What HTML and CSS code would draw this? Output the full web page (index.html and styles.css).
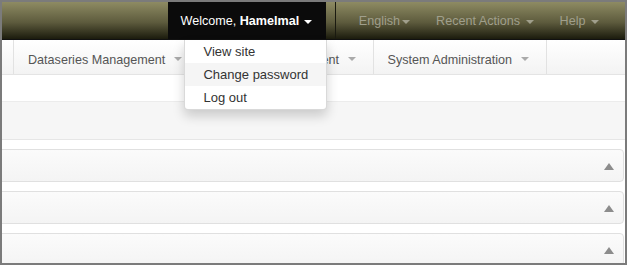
FILE: index.html
```html
<!DOCTYPE html>
<html lang="en">
<head>
    <meta charset="UTF-8">
    <title>Admin</title>
    <link rel="stylesheet" href="styles.css">
</head>
<body>

<div class="frame">
    <div class="topbar">
        <div class="welcome">
            Welcome, <strong>Hamelmal</strong> <b class="caret"></b>
            <ul class="dropdown">
                <li>View site</li>
                <li class="active">Change password</li>
                <li>Log out</li>
            </ul>
        </div>
        <div class="top-links">
            <span class="top-link">English<b class="caret"></b></span>
            <span class="top-link">Recent Actions <b class="caret"></b></span>
            <span class="top-link">Help <b class="caret"></b></span>
        </div>
    </div>

    <div class="subnav">
        <span class="sub-item">Dataseries Management <b class="caret"></b></span>
        <span class="sub-item">Indicator Management <b class="caret"></b></span>
        <span class="sub-item">System Administration <b class="caret"></b></span>
    </div>

    <div class="band"></div>

    <div class="panels">
        <div class="panel"><b class="up"></b></div>
        <div class="panel"><b class="up"></b></div>
        <div class="panel"><b class="up"></b></div>
    </div>
</div>

</body>
</html>
```

FILE: styles.css
```css
body { margin: 0; font-family: "Liberation Sans", Arial, sans-serif; font-size: 12.6px; color: #333; }
.frame { width: 627px; height: 265px; box-sizing: border-box; border: 2px solid #7b7b7b; overflow: hidden; background: #fff; }

.topbar { height: 37px; display: flex; justify-content: flex-end; background: linear-gradient(#8e8b63, #5d5b3d 55%, #1b1b0d); border-bottom: 1px solid #111; }
.welcome { position: relative; background: #0b0b0b; color: #fff; padding: 1px 14px 0 12px; line-height: 36px; z-index: 2; }
.welcome .caret { border-top-color: #fff; margin-left: 1px; }
.top-links { display: flex; margin-left: 9px; border-left: 1px solid #1a1a10; padding-left: 10px; padding-right: 13px; }
.top-link { color: #a09f8c; line-height: 36px; padding: 1px 13px 0; }
.top-link .caret { border-top-color: #a09f8c; }

.caret { display: inline-block; width: 0; height: 0; vertical-align: middle; margin-left: 2px; border-top: 4px solid #aaa; border-left: 4px solid transparent; border-right: 4px solid transparent; }

.dropdown { position: absolute; left: 16px; top: 100%; width: 141px; margin: 1px 0 0; padding: 0; list-style: none; background: #fff; border: 1px solid rgba(0,0,0,0.15); border-top: none; border-radius: 0 0 4px 4px; box-shadow: 0 6px 12px rgba(0,0,0,0.18); font-size: 13px; }
.dropdown li { color: #333; line-height: 23px; padding: 0 18px; white-space: nowrap; }
.dropdown li.active { background: #f5f5f5; }

.subnav { height: 34px; display: flex; padding-left: 11px; background: linear-gradient(#fff, #f3f3f3); border-bottom: 1px solid #e4e4e4; }
.sub-item { color: #555; line-height: 34px; padding: 3px 17px 0 14px; border-left: 1px solid #e2e2e2; }
.sub-item:last-child { border-right: 1px solid #e2e2e2; }
.sub-item .caret { margin-left: 5px; vertical-align: 3px; }

.band { height: 37px; margin-top: 26px; background: #f6f6f6; border-top: 1px solid #ececec; border-bottom: 1px solid #e6e6e6; }

.panels { display: flex; flex-direction: column; gap: 9px; margin: 9px 1px 0 -6px; }
.panel { height: 31px; display: flex; align-items: center; justify-content: flex-end; padding-right: 9px; background: linear-gradient(#fbfbfb, #f4f4f4); border: 1px solid #e0e0e0; border-radius: 4px; flex-shrink: 0; }
.up { width: 0; height: 0; border-bottom: 7px solid #8c8c8c; border-left: 5px solid transparent; border-right: 5px solid transparent; margin-top: 2px; }
```
